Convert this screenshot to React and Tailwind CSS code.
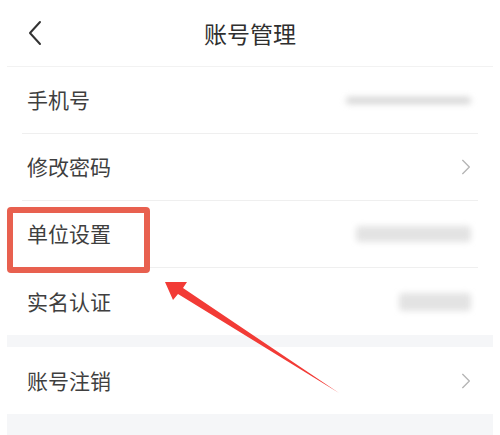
import React from 'react';

const font = { fontFamily: '"Noto Sans CJK SC", "Noto Sans", sans-serif' };

function Chevron({ className }) {
  return (
    <svg viewBox="0 0 12 20" className={className} fill="none" stroke="currentColor" strokeWidth="1.6" strokeLinecap="round" strokeLinejoin="round">
      <path d="M2 2 L10 10 L2 18" />
    </svg>
  );
}

function Blur({ w, h, shade = 'bg-[#d9d9d9]' }) {
  return <div className={`${w} ${h} ${shade} rounded-sm blur-[3px]`} />;
}

function Row({ label, right, last }) {
  return (
    <div className="px-[15px] h-[67px]">
      <div className={`h-full flex items-center justify-between pl-[5px] pr-[7px] ${last ? '' : 'border-b border-[#efefef]'}`}>
        <span className="text-[21px] text-[#3f3f3f]">{label}</span>
        {right}
      </div>
    </div>
  );
}

export default function App() {
  return (
    <div className="relative w-[500px] h-[435px] bg-white overflow-hidden" style={font}>
      {/* header */}
      <div className="mx-[7px] h-[67px] grid grid-cols-[1fr_auto_1fr] items-center border-b border-[#f2f2f2]">
        <div className="pl-[20px]">
          <svg viewBox="0 0 16 26" className="w-[16px] h-[26px] text-[#333]" fill="none" stroke="currentColor" strokeWidth="2" strokeLinecap="round" strokeLinejoin="round">
            <path d="M13 2 L3 13 L13 24" />
          </svg>
        </div>
        <h1 className="text-[23px] text-[#2f2f2f]">账号管理</h1>
        <div />
      </div>

      <div className="mx-[7px]">
        <Row label="手机号" right={<Blur w="w-[125px]" h="h-[7px]" shade="bg-[#d6d6d6]" />} />
        <Row label="修改密码" right={<Chevron className="w-[10px] h-[18px] text-[#b5b5b5]" />} />
        <Row label="单位设置" right={<Blur w="w-[115px]" h="h-[16px]" shade="bg-[#e3e3e3]" />} />
        <Row label="实名认证" right={<Blur w="w-[72px]" h="h-[18px]" shade="bg-[#e3e3e3]" />} last />
        <div className="h-[12px] bg-[#f5f6f8]" />
        <Row label="账号注销" right={<Chevron className="w-[10px] h-[18px] text-[#b5b5b5]" />} last />
        <div className="h-[30px] bg-[#f5f6f8]" />
      </div>

      {/* annotation box */}
      <div className="absolute left-[7px] top-[207px] w-[143px] h-[66px] border-[6px] border-[#e8604f] rounded-[4px]" />

      {/* annotation arrow */}
      <svg className="absolute left-0 top-0 w-[500px] h-[435px] pointer-events-none" viewBox="0 0 500 435">
        <polygon points="165,282 187,282 183,288 339,393 178,294 173,300" fill="#f23b36" />
      </svg>
    </div>
  );
}
